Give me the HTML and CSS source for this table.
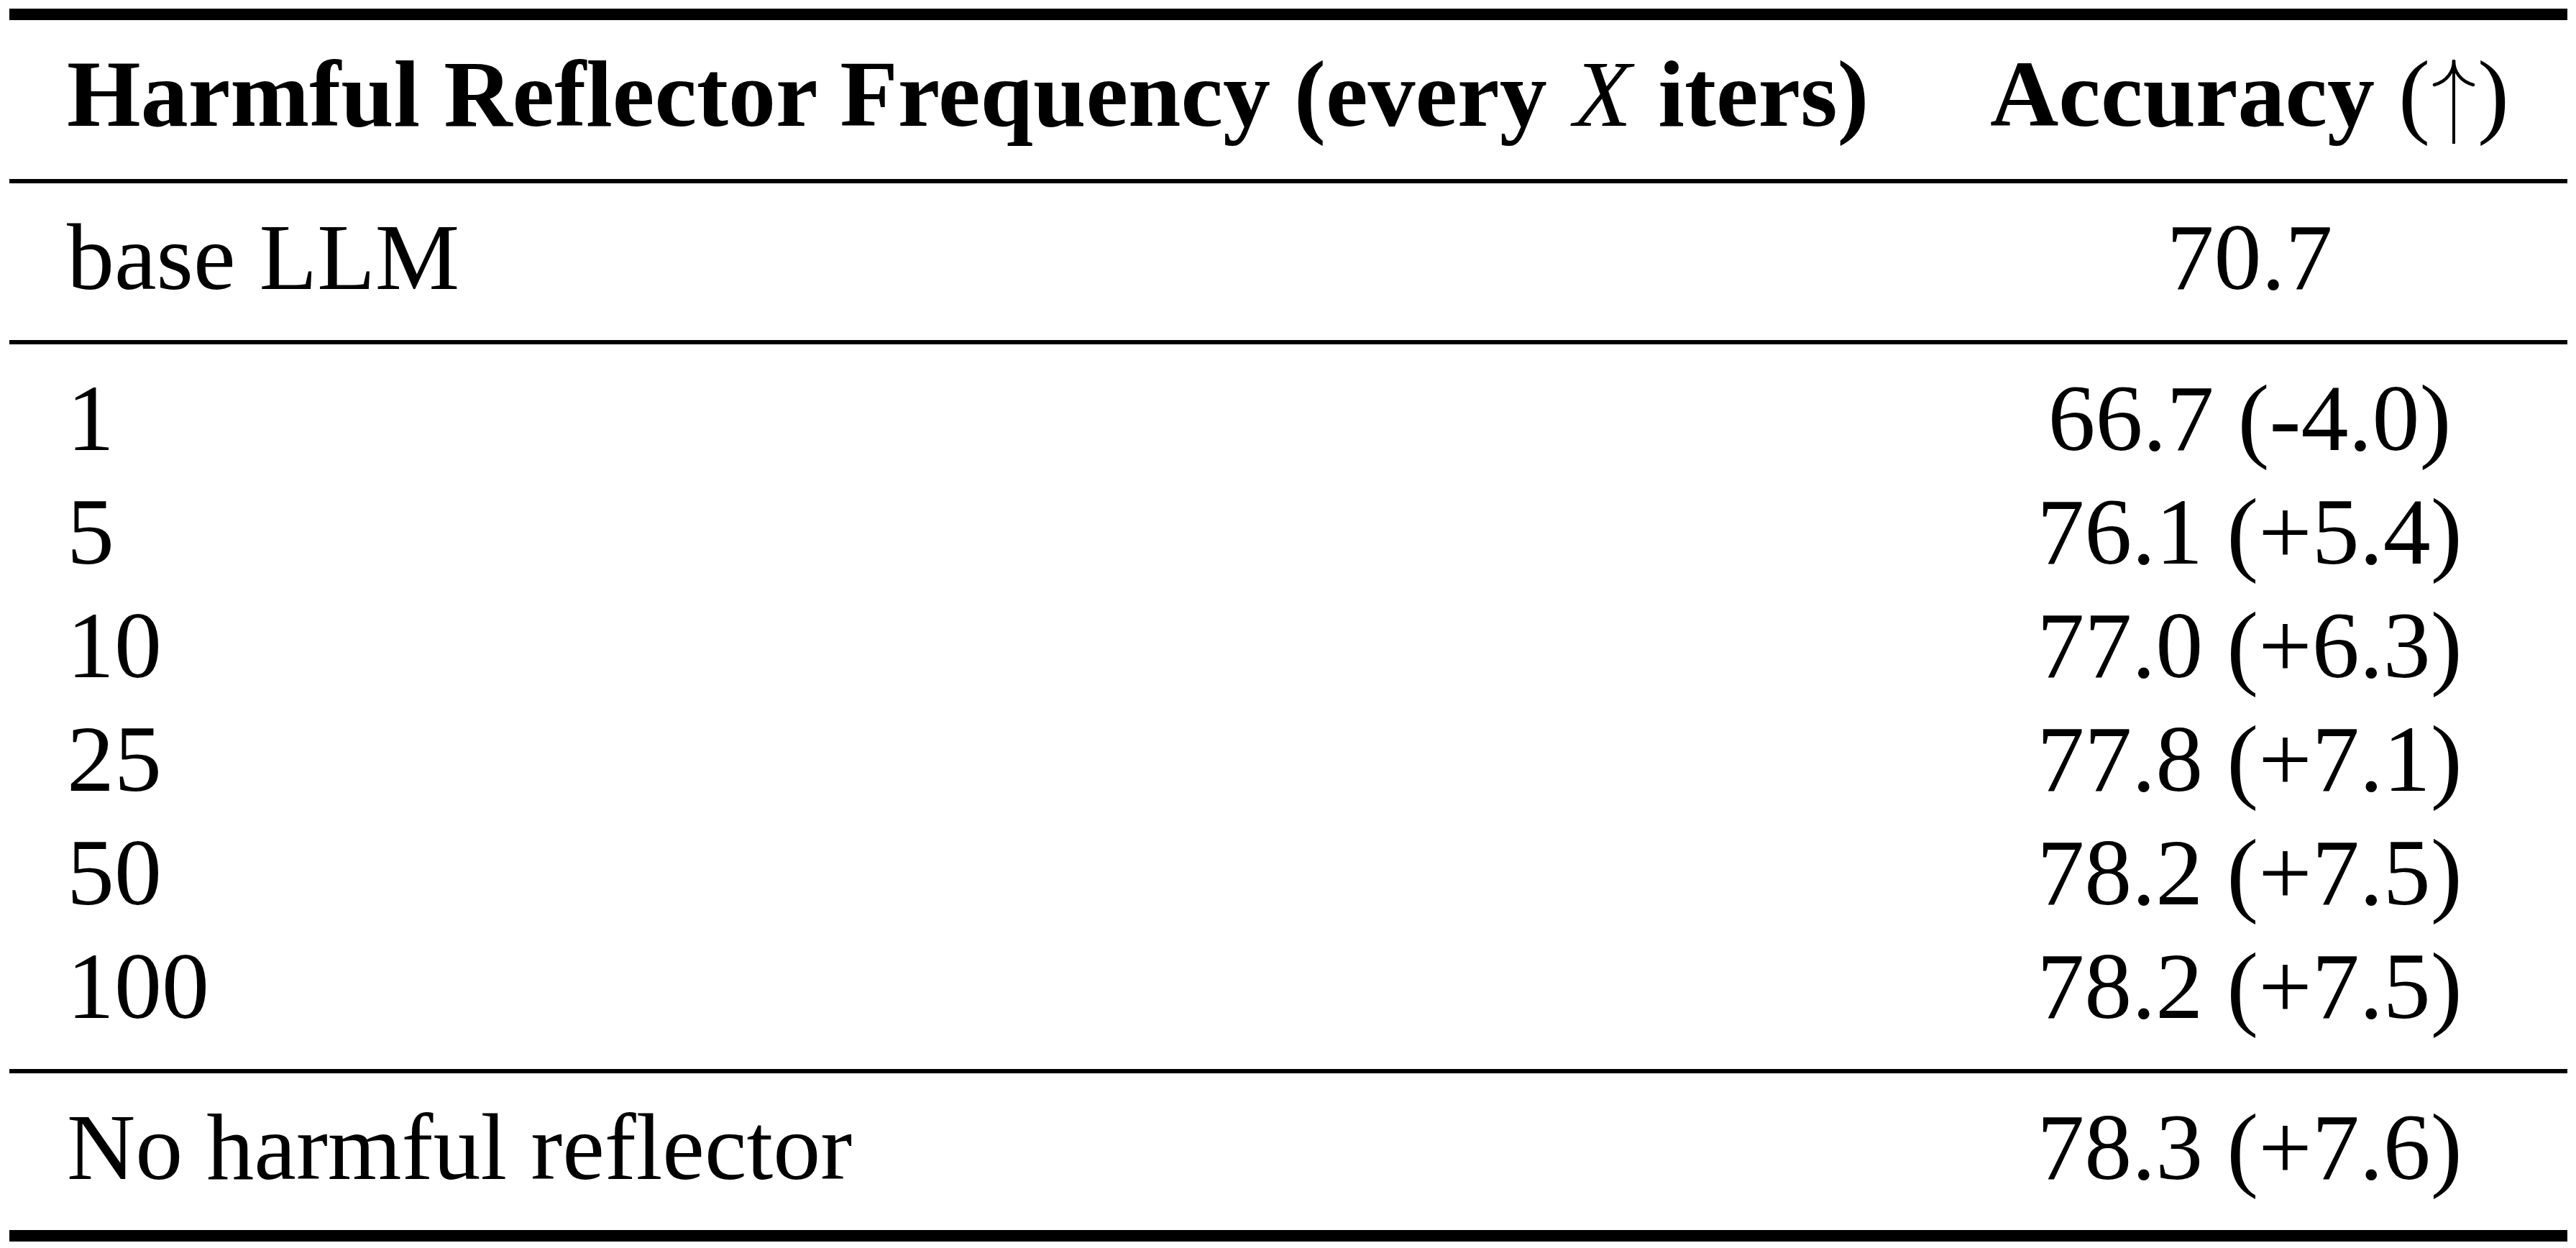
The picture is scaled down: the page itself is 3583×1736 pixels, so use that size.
FILE: index.html
```html
<!DOCTYPE html>
<html lang="en">
<head>
<meta charset="utf-8">
<title>Harmful Reflector Frequency</title>
<link rel="stylesheet" href="styles.css">
</head>
<body>
<div class="tbl">
  <div class="rule heavy top"></div>
  <div class="cell head left">Harmful Reflector Frequency (every <i class="math">X</i> iters)</div>
  <div class="cell head center">Accuracy <span class="reg">(<svg class="uparrow" viewBox="0 0 66 117" width="66" height="117" aria-label="up arrow"><line x1="33" y1="3" x2="33" y2="116" stroke="#000" stroke-width="4" stroke-linecap="round"/><path d="M33 2 C33 16 24 30 6 35" fill="none" stroke="#000" stroke-width="4.5" stroke-linecap="round"/><path d="M33 2 C33 16 42 30 60 35" fill="none" stroke="#000" stroke-width="4.5" stroke-linecap="round"/></svg>)</span></div>
  <div class="rule light"></div>
  <div class="cell left">base LLM</div>
  <div class="cell center">70.7</div>
  <div class="rule light"></div>
  <div class="cell left">1</div>
  <div class="cell center">66.7 (-4.0)</div>
  <div class="cell left">5</div>
  <div class="cell center">76.1 (+5.4)</div>
  <div class="cell left">10</div>
  <div class="cell center">77.0 (+6.3)</div>
  <div class="cell left">25</div>
  <div class="cell center">77.8 (+7.1)</div>
  <div class="cell left">50</div>
  <div class="cell center">78.2 (+7.5)</div>
  <div class="cell left">100</div>
  <div class="cell center">78.2 (+7.5)</div>
  <div class="rule light"></div>
  <div class="cell left">No harmful reflector</div>
  <div class="cell center">78.3 (+7.6)</div>
  <div class="rule heavy bottom"></div>
</div>
</body>
</html>
```

FILE: styles.css
```css
html, body {
  margin: 0;
  padding: 0;
  background: #ffffff;
}

body {
  font-family: "Liberation Serif", "Times New Roman", serif;
  color: #000000;
}

.tbl {
  display: grid;
  grid-template-columns: 2674px 884px;
  margin: 12px 0 0 13px;
  width: 3558px;
}

.rule {
  grid-column: 1 / -1;
  background: #000000;
  margin: 23px 0 37px;
}

.rule.heavy {
  height: 16px;
}

.rule.light {
  height: 6px;
}

.rule.top {
  margin-top: 0;
}

.rule.bottom {
  margin-bottom: 0;
}

.cell {
  font-size: 132px;
  line-height: 132px;
  padding: 0 80px 26px;
  white-space: nowrap;
}

.cell.left {
  text-align: left;
}

.cell.center {
  text-align: center;
}

.cell.head {
  font-weight: bold;
}

.math {
  font-weight: normal;
  font-style: italic;
  padding: 0 4px;
}

.reg {
  font-weight: normal;
}

.uparrow {
  vertical-align: -25px;
  display: inline-block;
}
```
